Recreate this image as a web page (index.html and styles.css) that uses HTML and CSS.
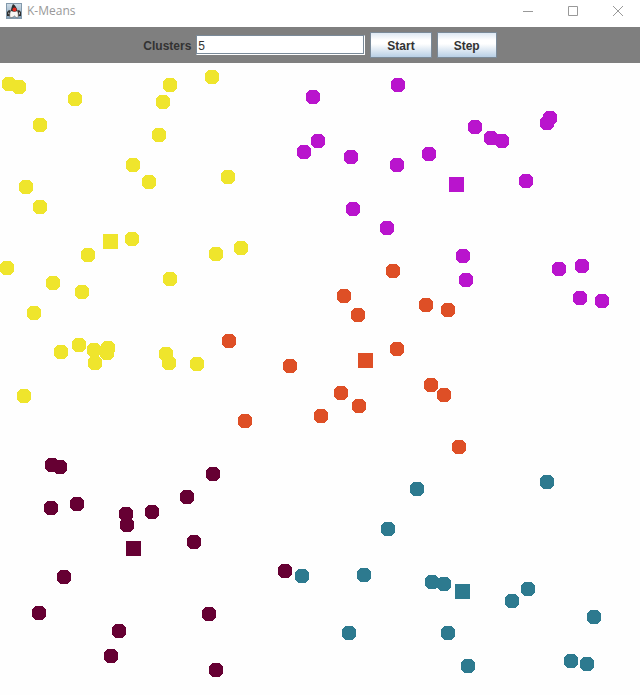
FILE: index.html
```html
<!DOCTYPE html>
<html lang="en">
<head>
<meta charset="utf-8">
<title>K-Means</title>
<link rel="stylesheet" href="styles.css">
</head>
<body>
<header class="titlebar">
  <svg class="app-icon" viewBox="0 0 16 16" aria-hidden="true">
    <defs><linearGradient id="sky" x1="0" y1="0" x2="0" y2="1"><stop offset="0" stop-color="#d3e0ea"/><stop offset="1" stop-color="#7d9cb5"/></linearGradient></defs>
    <rect width="16" height="16" fill="url(#sky)"/>
    <rect x=".5" y=".5" width="15" height="15" fill="none" stroke="#8399ab"/>
    <path d="M5 8L3 7 1 9v4h3l2-3zM11 8l2-1 2 2v4h-3l-2-3z" fill="#2e2e2e"/>
    <path d="M2 9.500l1.500.500-.5 1.500zM13 9l1 1-1 2z" fill="#f2f2f2"/>
    <path d="M5 7h6c1.500 3 1.500 5 1 7.500-1 .500-2 0-3.500-1.500-1.500 1.500-3.500 2-4.500 1.500-.5-2-.5-4.500 1-7.500z" fill="#f7f7f5" stroke="#555" stroke-width=".6"/>
    <path d="M7 1c2 1 4 4 4.500 7-2 1-4.500 1-6.500 0 0-3 1-5 2-7z" fill="#2e2e2e"/>
    <circle cx="8.500" cy="6.500" r="2" fill="#e5281e"/>
  </svg>
  <h1 class="title">K-Means</h1>
  <div class="window-controls">
    <button class="window-button" aria-label="Minimize"><svg viewBox="0 0 10 10"><path d="M0 5.500h10"/></svg></button>
    <button class="window-button" aria-label="Maximize"><svg viewBox="0 0 10 10"><path d="M.5.500h9v9h-9z"/></svg></button>
    <button class="window-button" aria-label="Close"><svg viewBox="0 0 10 10"><path d="M0 0l10 10M10 0L0 10"/></svg></button>
  </div>
</header>
<form class="toolbar">
  <label class="caption" for="clusters">Clusters</label>
  <input id="clusters" class="field" type="text" value="5">
  <button class="action" type="button">Start</button>
  <button class="action" type="button">Step</button>
</form>
<main class="plot">
<svg class="canvas" role="img" aria-label="Points grouped by cluster">
  <defs>
    <path id="p" d="M-4-7H4V-6H5V-5H6V-4H7V4H6V5H5V6H4V7H-4V6H-5V5H-6V4H-7V-4H-6V-5H-5V-6H-4z"/>
    <path id="c" d="M0 0h15v15h-15z"/>
  </defs>
  <g class="cluster-yellow">
    <use href="#p" x="9" y="21"/><use href="#p" x="19" y="24"/><use href="#p" x="75" y="36"/><use href="#p" x="40" y="62"/>
    <use href="#p" x="170" y="22"/><use href="#p" x="163" y="39"/><use href="#p" x="212" y="14"/><use href="#p" x="159" y="72"/>
    <use href="#p" x="133" y="102"/><use href="#p" x="149" y="119"/><use href="#p" x="228" y="114"/><use href="#p" x="26" y="124"/>
    <use href="#p" x="40" y="144"/><use href="#p" x="132" y="176"/><use href="#p" x="88" y="192"/><use href="#p" x="216" y="191"/>
    <use href="#p" x="241" y="185"/><use href="#p" x="7" y="205"/><use href="#p" x="53" y="220"/><use href="#p" x="82" y="229"/>
    <use href="#p" x="170" y="216"/><use href="#p" x="34" y="250"/><use href="#p" x="61" y="289"/><use href="#p" x="79" y="282"/>
    <use href="#p" x="94" y="287"/><use href="#p" x="108" y="285"/><use href="#p" x="107" y="290"/><use href="#p" x="95" y="300"/>
    <use href="#p" x="166" y="291"/><use href="#p" x="169" y="300"/><use href="#p" x="197" y="301"/><use href="#p" x="24" y="333"/>
    <use href="#c" x="103" y="171"/>
  </g>
  <g class="cluster-purple">
    <use href="#p" x="313" y="34"/><use href="#p" x="398" y="22"/><use href="#p" x="318" y="78"/><use href="#p" x="304" y="89"/>
    <use href="#p" x="351" y="94"/><use href="#p" x="397" y="102"/><use href="#p" x="429" y="91"/><use href="#p" x="475" y="64"/>
    <use href="#p" x="491" y="75"/><use href="#p" x="502" y="78"/><use href="#p" x="550" y="55"/><use href="#p" x="547" y="60"/>
    <use href="#p" x="526" y="118"/><use href="#p" x="353" y="146"/><use href="#p" x="387" y="165"/><use href="#p" x="463" y="193"/>
    <use href="#p" x="466" y="217"/><use href="#p" x="559" y="206"/><use href="#p" x="582" y="203"/><use href="#p" x="580" y="235"/>
    <use href="#p" x="602" y="238"/>
    <use href="#c" x="449" y="114"/>
  </g>
  <g class="cluster-orange">
    <use href="#p" x="393" y="208"/><use href="#p" x="344" y="233"/><use href="#p" x="358" y="252"/><use href="#p" x="426" y="242"/>
    <use href="#p" x="448" y="247"/><use href="#p" x="229" y="278"/><use href="#p" x="290" y="303"/><use href="#p" x="397" y="286"/>
    <use href="#p" x="341" y="330"/><use href="#p" x="359" y="343"/><use href="#p" x="321" y="353"/><use href="#p" x="431" y="322"/>
    <use href="#p" x="444" y="332"/><use href="#p" x="245" y="358"/><use href="#p" x="459" y="384"/>
    <use href="#c" x="358" y="290"/>
  </g>
  <g class="cluster-maroon">
    <use href="#p" x="52" y="402"/><use href="#p" x="60" y="404"/><use href="#p" x="213" y="411"/><use href="#p" x="187" y="434"/>
    <use href="#p" x="51" y="445"/><use href="#p" x="77" y="441"/><use href="#p" x="126" y="451"/><use href="#p" x="127" y="462"/>
    <use href="#p" x="152" y="449"/><use href="#p" x="194" y="479"/><use href="#p" x="64" y="514"/><use href="#p" x="285" y="508"/>
    <use href="#p" x="39" y="550"/><use href="#p" x="119" y="568"/><use href="#p" x="209" y="551"/><use href="#p" x="111" y="593"/>
    <use href="#p" x="216" y="607"/>
    <use href="#c" x="126" y="478"/>
  </g>
  <g class="cluster-teal">
    <use href="#p" x="417" y="426"/><use href="#p" x="547" y="419"/><use href="#p" x="388" y="466"/><use href="#p" x="302" y="513"/>
    <use href="#p" x="364" y="512"/><use href="#p" x="432" y="519"/><use href="#p" x="444" y="521"/><use href="#p" x="512" y="538"/>
    <use href="#p" x="528" y="526"/><use href="#p" x="594" y="554"/><use href="#p" x="349" y="570"/><use href="#p" x="448" y="570"/>
    <use href="#p" x="468" y="603"/><use href="#p" x="571" y="598"/><use href="#p" x="587" y="601"/>
    <use href="#c" x="455" y="521"/>
  </g>
</svg>
</main>
</body>
</html>
```
FILE: styles.css
```css
* { box-sizing: border-box; }

body {
  margin: 0;
  min-height: 100vh;
  display: flex;
  flex-direction: column;
  background: #fefefe;
  font-family: "Liberation Sans", Arial, sans-serif;
  font-size: 12px;
  color: #333;
}

.titlebar {
  display: flex;
  align-items: center;
  height: 27px;
  padding: 0 0 5px 6px;
  background: #fff;
}

.app-icon { width: 16px; height: 16px; }

.title {
  margin: 0 auto 0 5px;
  font: 12px/16px "Open Sans", "Noto Sans", sans-serif;
  color: #999;
}

.window-controls { display: flex; }

.window-button {
  display: grid;
  place-items: center;
  width: 45px;
  height: 22px;
  padding: 0;
  border: 0;
  background: none;
}

.window-button svg {
  width: 10px;
  height: 10px;
  fill: none;
  stroke: #999;
}

.toolbar {
  display: flex;
  justify-content: center;
  align-items: center;
  gap: 5px;
  height: 36px;
  background: #7f7f7f;
  font-weight: bold;
}

.caption { padding-top: 2px; }

.field {
  width: 169px;
  height: 20px;
  padding: 2px 1px 0;
  border: 1px solid;
  border-color: #7a8a99 #fff #fff #7a8a99;
  box-shadow: inset -1px -1px #7a8a99, inset 1px 1px #fff;
  background: #fff;
  font: 12px "Liberation Sans", Arial, sans-serif;
  color: #333;
}

.action {
  height: 26px;
  padding: 2px 16px 0;
  border: 1px solid #7a8a99;
  background: linear-gradient(#dde8f3, #fff 30%, #fff 45%, #b8cfe5);
  font: bold 12px "Liberation Sans", Arial, sans-serif;
  color: #333;
}

.plot {
  flex: 1;
  display: flex;
}

.canvas {
  flex: 1;
  shape-rendering: crispEdges;
}

.cluster-yellow { fill: #efe52c; }
.cluster-purple { fill: #b914cd; }
.cluster-orange { fill: #de4f26; }
.cluster-maroon { fill: #660033; }
.cluster-teal { fill: #2d7a8f; }
```
